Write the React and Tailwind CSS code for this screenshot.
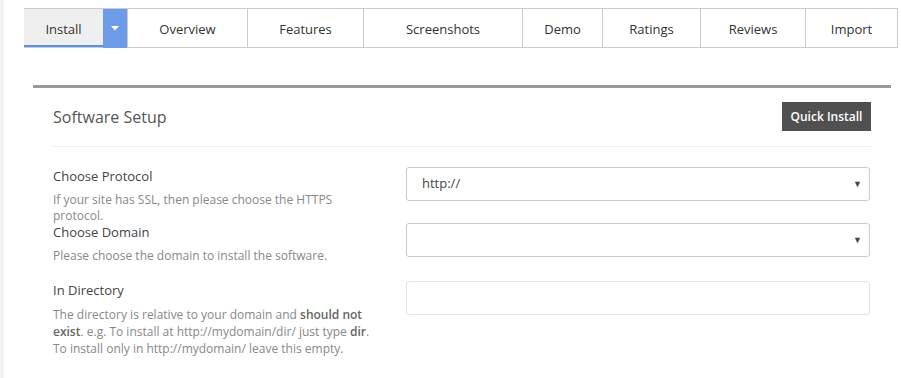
const tabs = [
  { label: 'Overview', w: 'w-[120px]' },
  { label: 'Features', w: 'w-[116px]' },
  { label: 'Screenshots', w: 'w-[159px]' },
  { label: 'Demo', w: 'w-[80px]' },
  { label: 'Ratings', w: 'w-[98px]' },
  { label: 'Reviews', w: 'w-[105px]' },
  { label: 'Import', w: 'w-[92px]' },
]

const Field = ({ label, children, control, lead = 'leading-[16px]' }) => (
  <div className="flex items-start">
    <div className="w-[353px] shrink-0">
      <div className="text-[13px] leading-[18px] text-[#444]">{label}</div>
      <div className={`mt-[7px] text-[12px] ${lead} text-[#888]`}>{children}</div>
    </div>
    {control}
  </div>
)

const Select = ({ value }) => (
  <div className="flex h-[34px] w-[464px] items-center justify-between rounded-[3px] border border-[#ccc] bg-white pl-[15px] pr-[7px] text-[13px] text-[#444]">
    <span>{value}</span>
    <span className="text-[9px] text-[#444]">▼</span>
  </div>
)

export default function App() {
  return (
    <div
      className="flex min-h-[378px] w-[901px] bg-white"
      style={{ fontFamily: '"Open Sans", "Noto Sans", sans-serif' }}
    >
      <div className="w-[4px] shrink-0 bg-[#f2f2f2]" />
      <div className="flex-1 pl-[20px] pr-[4px] pt-[8px]">
        {/* tabs */}
        <div className="flex h-[40px] border-y border-r border-[#ccc] text-[13px] text-[#333]">
          <div className="flex w-[79px] items-center justify-center border-b-2 border-[#5b8ee6] bg-[#efefef] pt-[5px]">
            Install
          </div>
          <div className="-mb-px flex w-[24px] items-center justify-center bg-[#6e9be8]">
            <svg width="8" height="5" viewBox="0 0 8 5">
              <path d="M0 0h8L4 4.5z" fill="#fff" />
            </svg>
          </div>
          {tabs.map((t) => (
            <div
              key={t.label}
              className={`flex ${t.w} items-center justify-center border-l border-[#ccc] bg-white pt-[3px]`}
            >
              {t.label}
            </div>
          ))}
        </div>

        {/* panel */}
        <div className="ml-[9px] mr-[7px] mt-[37px] border-t-[3px] border-[#999] pb-[20px] pl-[20px] pr-[20px]">
          <div className="flex items-center justify-between pb-[15px] pt-[14px]">
            <div className="text-[16px] text-[#555]">Software Setup</div>
            <button className="h-[29px] w-[89px] bg-[#505050] text-[12px] font-semibold text-white">
              Quick Install
            </button>
          </div>
          <div className="border-t border-[#eee]" />

          <div className="mt-[20px]">
            <Field label="Choose Protocol" control={<Select value="http://" />}>
              If your site has SSL, then please choose the HTTPS
              <br />
              protocol.
            </Field>
          </div>
          <div className="-mt-px">
            <Field label="Choose Domain" control={<Select value="" />}>
              Please choose the domain to install the software.
            </Field>
          </div>
          <div className="mt-[17px]">
            <Field
              label="In Directory"
              lead="leading-[17px]"
              control={
                <div className="h-[34px] w-[464px] rounded-[3px] border border-[#e2e2e2] bg-white" />
              }
            >
              The directory is relative to your domain and{' '}
              <b className="font-semibold text-[#666]">should not</b>
              <br />
              <b className="font-semibold text-[#666]">exist</b>. e.g. To install at http://mydomain/dir/ just type{' '}
              <b className="font-semibold text-[#666]">dir</b>.
              <br />
              To install only in http://mydomain/ leave this empty.
            </Field>
          </div>
        </div>
      </div>
    </div>
  )
}
